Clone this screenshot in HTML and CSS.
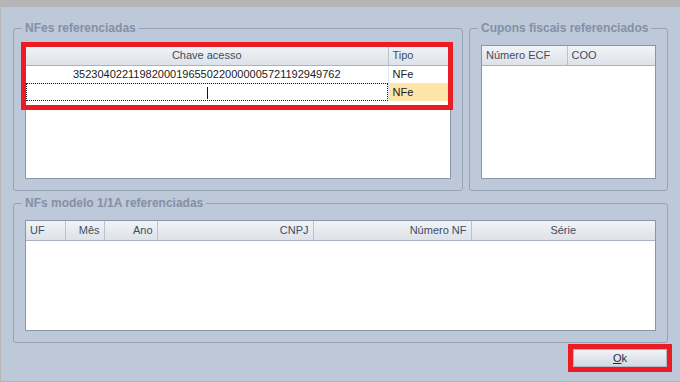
FILE: index.html
```html
<!DOCTYPE html>
<html lang="pt">
<head>
  <meta charset="UTF-8" />
  <title>Documentos referenciados</title>
  <link rel="stylesheet" href="styles.css">
</head>
<body>
  <div class="titlebar"></div>
  <div class="window">
    <div class="top-row">
      <fieldset class="group group-nfe">
        <legend>NFes referenciadas</legend>
        <div class="grid grid-nfe">
          <table>
            <colgroup><col style="width: 362px"><col></colgroup>
            <thead>
              <tr><th class="center">Chave acesso</th><th class="left">Tipo</th></tr>
            </thead>
            <tbody>
              <tr><td class="center">35230402211982000196550220000005721192949762</td><td class="left">NFe</td></tr>
              <tr class="editing"><td class="edit-cell"><span class="caret"></span></td><td class="left selected">NFe</td></tr>
            </tbody>
          </table>
          <div class="mark mark-grid"></div>
        </div>
      </fieldset>
      <fieldset class="group group-cupom">
        <legend>Cupons fiscais referenciados</legend>
        <div class="grid">
          <table>
            <colgroup><col style="width: 85px"><col></colgroup>
            <thead>
              <tr><th class="left">Número ECF</th><th class="left">COO</th></tr>
            </thead>
          </table>
        </div>
      </fieldset>
    </div>

    <fieldset class="group group-modelo">
      <legend>NFs modelo 1/1A referenciadas</legend>
      <div class="grid grid-modelo">
        <table>
          <colgroup>
            <col style="width: 39px"><col style="width: 39px"><col style="width: 53px">
            <col style="width: 156px"><col style="width: 158px"><col>
          </colgroup>
          <thead>
            <tr>
              <th class="left">UF</th>
              <th class="right">Mês</th>
              <th class="right">Ano</th>
              <th class="right">CNPJ</th>
              <th class="right">Número NF</th>
              <th class="center">Série</th>
            </tr>
          </thead>
        </table>
      </div>
    </fieldset>

    <div class="footer">
      <div class="btn-wrap">
        <button class="btn"><u>O</u>k</button>
        <div class="mark mark-btn"></div>
      </div>
    </div>
  </div>
  <div class="bottombar"></div>
</body>
</html>
```

FILE: styles.css
```css
* { box-sizing: border-box; }
html, body {
  margin: 0;
  height: 100%;
}
body {
  font-family: "Liberation Sans", Arial, sans-serif;
  font-size: 11px;
  color: #1b1b1b;
  background: #bdc8d8;
  overflow: hidden;
}
.titlebar {
  height: 7px;
  background: #b5b5b5;
}
.bottombar {
  height: 1px;
  background: #b5b5b5;
}
.window {
  height: 374px;
  border-left: 1px solid #b5b5b5;
  padding: 14px 12px 0 12px;
  display: flex;
  flex-direction: column;
}
.top-row {
  display: flex;
  gap: 6px;
}
.group {
  margin: 0;
  min-width: 0;
  border: 1px solid #97a3b6;
  border-radius: 3px;
  padding: 10px 11px 11px 11px;
}
.group legend {
  font-weight: bold;
  font-size: 12px;
  line-height: 14px;
  color: #8390a5;
  padding: 0 3px;
  margin-left: -3px;
}
.group-nfe { width: 450px; }
.group-cupom { width: 199px; }
.group-modelo {
  margin-top: 5px;
  width: 655px;
}
.grid {
  position: relative;
  background: #fff;
  border: 1px solid #8a95a8;
  height: 134px;
}
.grid-modelo { height: 111px; }
.grid table {
  width: 100%;
  border-collapse: collapse;
  table-layout: fixed;
}
.grid th {
  height: 19px;
  padding: 0 4px;
  font-weight: normal;
  color: #3f4c62;
  background: linear-gradient(#f1f3f6, #dde2e9);
  border-bottom: 1px solid #a9b3c3;
  border-right: 1px solid #b9c2cf;
  white-space: nowrap;
}
.grid th:last-child { border-right: none; }
.grid td {
  height: 18px;
  padding: 0 4px;
  border-bottom: 1px solid #e2e6ec;
  border-right: 1px solid #e2e6ec;
  white-space: nowrap;
  overflow: hidden;
}
.grid td:last-child { border-right: none; }
.left { text-align: left; }
.right { text-align: right; }
.center { text-align: center; }
.editing td { border-bottom: none; }
.edit-cell {
  position: relative;
  outline: 1px dotted #222;
  outline-offset: -1px;
}
.caret {
  position: absolute;
  left: 181px;
  top: 3px;
  width: 1px;
  height: 12px;
  background: #111;
}
.selected { background: #fde5a9; }
.mark {
  position: absolute;
  border: 5px solid #ec1c24;
  pointer-events: none;
}
.mark-grid {
  left: -5px;
  top: -4px;
  width: 432px;
  height: 68px;
}
.footer {
  display: flex;
  justify-content: flex-end;
  padding-right: 1px;
  margin-top: 6px;
}
.btn-wrap { position: relative; }
.btn {
  display: block;
  width: 94px;
  height: 18px;
  margin: 0;
  padding: 0;
  font-family: "Liberation Sans", Arial, sans-serif;
  font-size: 11px;
  color: #1e2a44;
  background: linear-gradient(#f1f3f7, #d3d9e3);
  border: 1px solid #b0b9c8;
  border-radius: 2px;
}
.mark-btn {
  left: -5px;
  top: -5px;
  width: 104px;
  height: 28px;
}
```
